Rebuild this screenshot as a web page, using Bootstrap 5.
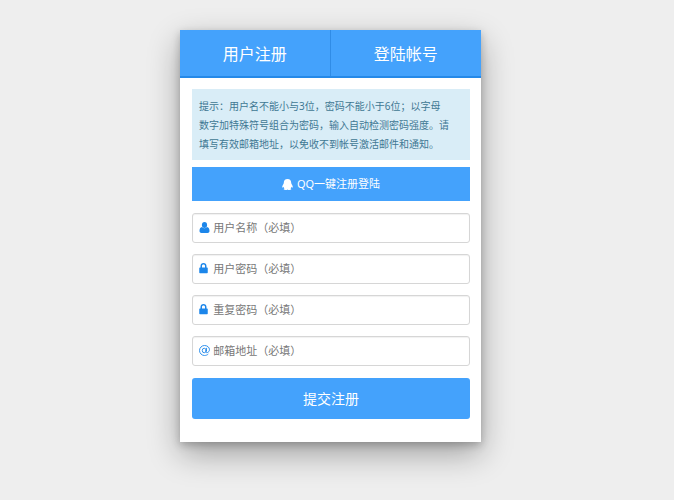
<!DOCTYPE html>
<html lang="zh-CN">
<head>
<meta charset="utf-8">
<meta name="viewport" content="width=device-width, initial-scale=1">
<title>用户注册</title>
<link href="https://cdn.jsdelivr.net/npm/bootstrap@5.3.0/dist/css/bootstrap.min.css" rel="stylesheet">
<style>
body { background: #eee; font-family: "Noto Sans", "Noto Sans CJK SC", sans-serif; font-size: 11px; padding: 30px 13px 30px 0; }
.panel { max-width: 301px; box-shadow: 0 12px 30px rgba(0,0,0,.32), 0 3px 8px rgba(0,0,0,.22); }
.tabs { background: #44a2fc; border-bottom: 2px solid #2589e8; }
.tabs a { color: #fff; font-size: 16px; line-height: 24px; padding: 12px 0 10px; }
.tabs a:first-child { border-right: 1px solid #308ce6; }
.panel-body { padding: 11px 11px 23px 12px; }
.tip { background: #d9edf7; color: #3f7893; font-size: 10px; line-height: 19px; padding: 8px 7px 6px; margin-bottom: 7px; }
.btn-blue { --bs-btn-bg: #44a2fc; --bs-btn-color: #fff; --bs-btn-hover-bg: #2589e8; --bs-btn-hover-color: #fff; --bs-btn-border-width: 0; --bs-btn-padding-y: 0; }
.btn-qq { --bs-btn-font-size: 11px; --bs-btn-border-radius: 0; height: 34px; margin-bottom: 12px; }
.btn-send { --bs-btn-font-size: 14px; --bs-btn-border-radius: 3px; height: 41px; margin-top: 12px; }
.fields { gap: 11px; }
.field { border: 1px solid #d6d6d6; border-radius: 3px; height: 30px; padding-left: 6px; box-shadow: inset 0 1px 1px rgba(0,0,0,.06); }
.field:focus-within { border-color: #44a2fc; }
.field label { width: 15px; padding-bottom: 2px; color: #1c86ea; }
.field input { font-size: 11px; line-height: 18px; }
.field input:focus { box-shadow: none; }
.field input::placeholder { color: #777; }
</style>
</head>
<body class="min-vh-100">
<main class="panel bg-white mx-auto">
  <nav class="tabs d-flex text-center">
    <a class="flex-fill w-50 text-decoration-none" href="#register">用户注册</a>
    <a class="flex-fill w-50 text-decoration-none" href="#login">登陆帐号</a>
  </nav>
  <form class="panel-body" id="register">
    <p class="tip">提示：用户名不能小与3位，密码不能小于6位；以字母<br>数字加特殊符号组合为密码，输入自动检测密码强度。请<br>填写有效邮箱地址，以免收不到帐号激活邮件和通知。</p>
    <button type="button" class="btn btn-blue btn-qq w-100 d-flex align-items-center justify-content-center gap-1">
      <svg width="11" height="11" viewBox="0 0 22 22" fill="currentColor" aria-hidden="true"><path d="M11 0C6 0 3.600 3.300 3.600 7.500C3.600 9 3 10 2 11.500C.4 14 0 16.500 .8 17.200C1.500 17.600 2.400 16.600 3 15.500C3.300 17 4 18 4.900 18.800C3.500 19.500 3.100 20.300 3.800 21.100C5 22.300 9.500 22.200 11 20.900C12.500 22.200 17 22.300 18.200 21.100C18.900 20.300 18.500 19.500 17.100 18.800C18 18 18.700 17 19 15.500C19.600 16.600 20.500 17.600 21.200 17.200C22 16.500 21.600 14 20 11.500C19 10 18.400 9 18.400 7.500C18.400 3.300 16 0 11 0Z"/></svg>
      <span>QQ一键注册登陆</span>
    </button>
    <div class="fields d-flex flex-column">
      <div class="field d-flex align-items-center">
        <label for="user" class="d-flex"><svg width="11" height="11" viewBox="0 0 22 22" fill="currentColor" aria-hidden="true"><ellipse cx="11" cy="6" rx="5.200" ry="6"/><path d="M6 10C2.500 10.500 1 13.500 1 18C1 20.500 2.500 22 5 22H17C19.500 22 21 20.500 21 18C21 13.500 19.500 10.500 16 10C13 13.300 9 13.300 6 10Z"/></svg></label>
        <input id="user" type="text" class="form-control border-0 bg-transparent p-0" placeholder="用户名称（必填）" aria-label="用户名称">
      </div>
      <div class="field d-flex align-items-center">
        <label for="pass" class="d-flex"><svg width="9" height="11" viewBox="0 0 18 22" fill="currentColor" aria-hidden="true"><path fill-rule="evenodd" d="M3 9V6C3 2.500 5.500 0 9 0S15 2.500 15 6V9H16C17 9 17.500 9.600 17.500 10.500V19C17.500 20 17 20.500 16 20.500H2C1 20.500 .5 20 .5 19V10.500C.5 9.600 1 9 2 9ZM6 9H12V6C12 4 10.800 3 9 3S6 4 6 6Z"/></svg></label>
        <input id="pass" type="password" class="form-control border-0 bg-transparent p-0" placeholder="用户密码（必填）" aria-label="用户密码">
      </div>
      <div class="field d-flex align-items-center">
        <label for="pass2" class="d-flex"><svg width="9" height="11" viewBox="0 0 18 22" fill="currentColor" aria-hidden="true"><path fill-rule="evenodd" d="M3 9V6C3 2.500 5.500 0 9 0S15 2.500 15 6V9H16C17 9 17.500 9.600 17.500 10.500V19C17.500 20 17 20.500 16 20.500H2C1 20.500 .5 20 .5 19V10.500C.5 9.600 1 9 2 9ZM6 9H12V6C12 4 10.800 3 9 3S6 4 6 6Z"/></svg></label>
        <input id="pass2" type="password" class="form-control border-0 bg-transparent p-0" placeholder="重复密码（必填）" aria-label="重复密码">
      </div>
      <div class="field d-flex align-items-center">
        <label for="mail" class="d-flex"><svg width="11" height="11" viewBox="0 0 22 22" fill="none" stroke="currentColor" stroke-width="1.800" stroke-linecap="round" aria-hidden="true"><ellipse cx="10.500" cy="11" rx="4" ry="4.500"/><path d="M15.200 6.500L14.200 13C14 15 15 15.800 16.500 15.300C19 14.500 21 12 21 9.500C21 4.500 16.500 1 11 1C5.500 1 1 5.500 1 11S5.500 21 11 21C14 21 16.500 20 18 18.500"/></svg></label>
        <input id="mail" type="email" class="form-control border-0 bg-transparent p-0" placeholder="邮箱地址（必填）" aria-label="邮箱地址">
      </div>
    </div>
    <button type="submit" class="btn btn-blue btn-send w-100">提交注册</button>
  </form>
</main>
<script src="https://cdn.jsdelivr.net/npm/bootstrap@5.3.0/dist/js/bootstrap.bundle.min.js"></script>
</body>
</html>
